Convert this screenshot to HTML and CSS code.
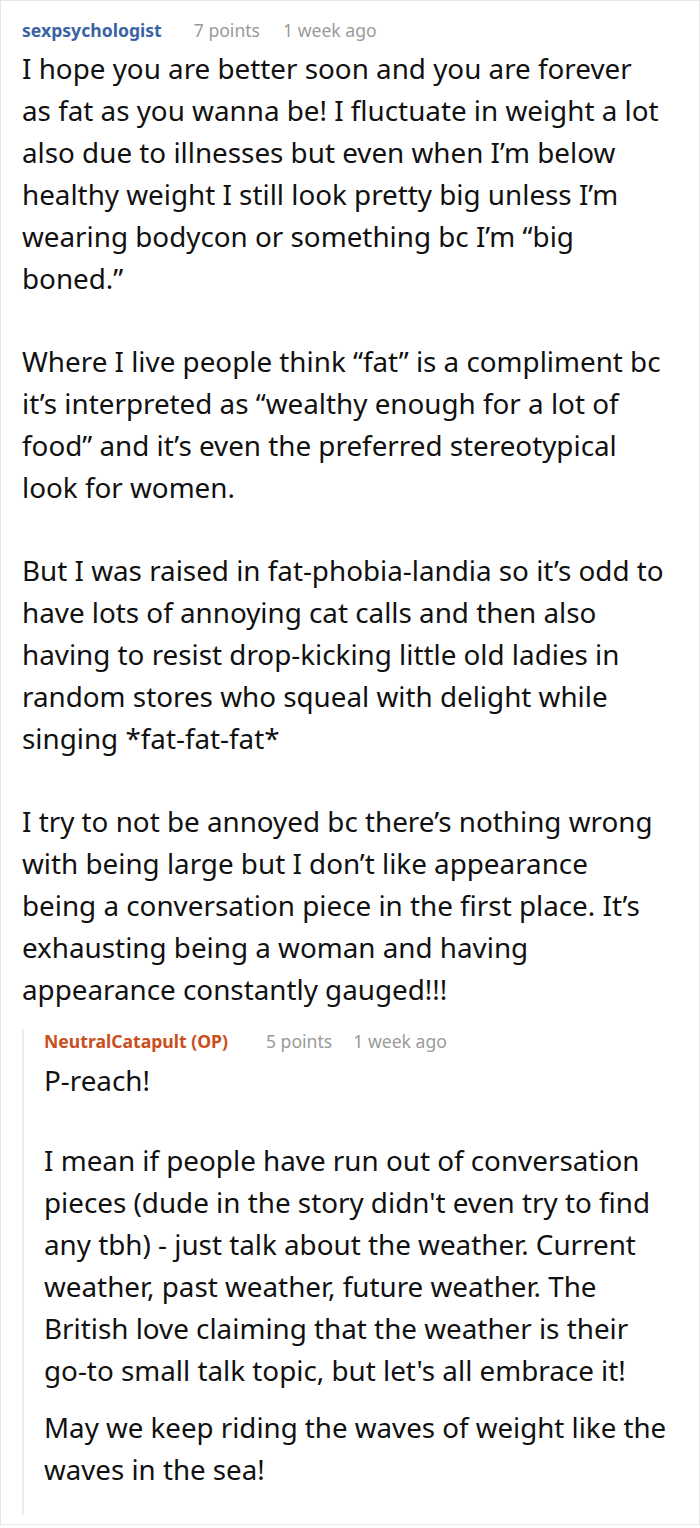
FILE: index.html
```html
<!DOCTYPE html>
<html>
<head>
<meta charset="utf-8">
<link rel="stylesheet" href="styles.css">
</head>
<body>
<div class="thread">
  <div class="comment">
    <div class="meta">
      <span class="author">sexpsychologist</span>
      <span class="points">7 points</span>
      <span class="time">1 week ago</span>
    </div>
    <div class="body">
      <p>I hope you are better soon and you are forever as fat as you wanna be! I fluctuate in weight a lot also due to illnesses but even when I’m below healthy weight I still look pretty big unless I’m wearing bodycon or something bc I’m “big boned.”</p>
      <p>Where I live people think “fat” is a compliment bc it’s interpreted as “wealthy enough for a lot of food” and it’s even the preferred stereotypical look for women.</p>
      <p>But I was raised in fat-phobia-landia so it’s odd to have lots of annoying cat calls and then also having to resist drop-kicking little old ladies in random stores who squeal with delight while singing *fat-fat-fat*</p>
      <p>I try to not be annoyed bc there’s nothing wrong with being large but I don’t like appearance being a conversation piece in the first place. It’s exhausting being a woman and having appearance constantly gauged!!!</p>
    </div>
    <div class="reply">
      <div class="meta">
        <span class="author op">NeutralCatapult (OP)</span>
        <span class="points">5 points</span>
        <span class="time">1 week ago</span>
      </div>
      <div class="body">
        <p class="short">P-reach!</p>
        <p class="mid">I mean if people have run out of conversation pieces (dude in the story didn't even try to find any tbh) - just talk about the weather. Current weather, past weather, future weather. The British love claiming that the weather is their <span class="nowrap">go-to</span> small talk topic, but let's all embrace it!</p>
        <p class="last">May we keep riding the waves of weight like the waves in the sea!</p>
      </div>
    </div>
  </div>
</div>
</body>
</html>
```

FILE: styles.css
```css
html, body {
  margin: 0;
  padding: 0;
  background: #fff;
}
body {
  font-family: "Noto Sans", "Open Sans", sans-serif;
  color: #111;
}
.thread {
  width: 700px;
  height: 1525px;
  box-sizing: border-box;
  border: 1px solid #e6e6e6;
}
.comment {
  padding: 17px 34px 0 21px;
}
.meta {
  font-size: 17.6px;
  line-height: 24px;
  display: flex;
  white-space: nowrap;
}
.author {
  font-weight: bold;
  color: #3a63a3;
  margin-right: 32px;
}
.author.op {
  color: #c94f20;
  margin-right: 38px;
}
.points {
  color: #9a9a9a;
  margin-right: 23px;
}
.reply .points {
  margin-right: 21px;
}
.time {
  color: #9a9a9a;
}
.body {
  margin-top: 5px;
  font-size: 27.8px;
  line-height: 42px;
}
.body p {
  margin: 0 0 41px 0;
}
.body p:last-child {
  margin-bottom: 0;
}
.nowrap {
  white-space: nowrap;
}
.reply {
  margin-top: 31px;
  border-left: 2px solid #ececec;
  padding-left: 20px;
  padding-bottom: 25px;
}
.reply .meta {
  margin-top: -12px;
}
.reply .body {
  margin-top: 6px;
}
.reply .body p.short {
  margin-bottom: 38px;
}
.reply .body p.mid {
  margin-bottom: 15px;
}
.reply .body p.last {
  font-size: 27.7px;
  margin-right: -14px;
}
```
